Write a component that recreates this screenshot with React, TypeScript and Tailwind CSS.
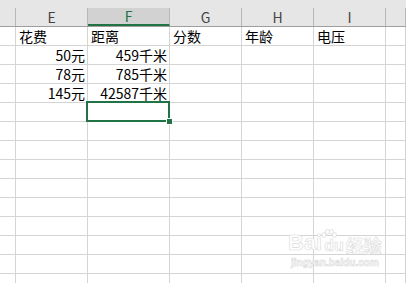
import React from "react";

const font = { fontFamily: '"Noto Sans CJK SC", "Noto Sans", sans-serif' };

const widths = ["w-[16px]", "w-[72px]", "w-[82px]", "w-[72px]", "w-[72px]", "w-[72px]", "w-[20px]"];
const letters = ["", "E", "F", "G", "H", "I", ""];

type Cell = { t: string; right?: boolean };
const data: Cell[][] = [
  [{ t: "" }, { t: "花费" }, { t: "距离" }, { t: "分数" }, { t: "年龄" }, { t: "电压" }, { t: "" }],
  [{ t: "" }, { t: "50元", right: true }, { t: "459千米", right: true }, { t: "" }, { t: "" }, { t: "" }, { t: "" }],
  [{ t: "" }, { t: "78元", right: true }, { t: "785千米", right: true }, { t: "" }, { t: "" }, { t: "" }, { t: "" }],
  [{ t: "" }, { t: "145元", right: true }, { t: "42587千米", right: true }, { t: "" }, { t: "" }, { t: "" }, { t: "" }],
];

export default function App() {
  const rows: Cell[][] = [...data];
  while (rows.length < 14) rows.push(Array.from({ length: 7 }, () => ({ t: "" })));
  return (
    <div className="relative w-[406px] h-[283px] overflow-hidden bg-white" style={font}>
      <div className="flex h-[27px] bg-[#e6e6e6] border-b border-[#9e9e9e] pt-[8px]">
        {widths.map((w, i) => (
          <div
            key={i}
            className={
              i === 2
                ? `${w} shrink-0 h-[18px] border-r border-[#b8b8b8] bg-[#d2d2d2] border-b-2 border-b-[#217346] flex items-center justify-center text-[14px] leading-none text-[#217346]`
                : `${w} shrink-0 h-[18px] border-r border-[#b8b8b8] flex items-center justify-center text-[14px] leading-none text-[#444444]`
            }
          >
            {letters[i]}
          </div>
        ))}
      </div>
      {rows.map((r, ri) => (
        <div key={ri} className="flex h-[19px] border-b border-[#d4d4d4]">
          {r.map((c, ci) => (
            <div
              key={ci}
              className={`${widths[ci]} shrink-0 h-[18px] border-r border-[#d4d4d4] flex items-end overflow-visible whitespace-nowrap text-[14px] leading-[18px] text-black ${
                c.right ? "justify-end pr-[2px]" : "justify-start pl-[3px]"
              }`}
            >
              {c.t}
            </div>
          ))}
        </div>
      ))}
      <div className="absolute left-[86px] top-[101px] w-[84px] h-[21px] border-2 border-[#217346]" />
      <div className="absolute left-[166px] top-[118px] w-[7px] h-[7px] bg-[#217346] border border-white" />
      <svg className="absolute left-[320px] top-[229px]" width="18" height="14" viewBox="0 0 18 14">
        <g fill="white" stroke="#dcdcdc" strokeWidth="0.8">
          <ellipse cx="4" cy="6" rx="2" ry="2.5" />
          <ellipse cx="7.5" cy="2.8" rx="2" ry="2.5" />
          <ellipse cx="11.5" cy="2.8" rx="2" ry="2.5" />
          <ellipse cx="14.5" cy="6" rx="2" ry="2.5" />
        </g>
      </svg>
      <div className="absolute left-[288px] top-[232px] flex flex-col items-center text-white [-webkit-text-stroke:0.6px_#dadada]">
        <div className="flex items-end gap-[2px] text-[22px] font-bold leading-none" style={{ fontFamily: '"Liberation Sans", "Noto Sans CJK SC", sans-serif' }}>
          <span>Bai</span>
          <span className="text-[16px]">du</span>
          <span className="text-[18px]" style={{ fontFamily: '"Noto Sans CJK SC", sans-serif' }}>经验</span>
        </div>
        <div className="mt-[4px] text-[10px] font-bold leading-none" style={{ fontFamily: '"Liberation Sans", sans-serif' }}>
          jingyan.baidu.com
        </div>
      </div>
    </div>
  );
}
